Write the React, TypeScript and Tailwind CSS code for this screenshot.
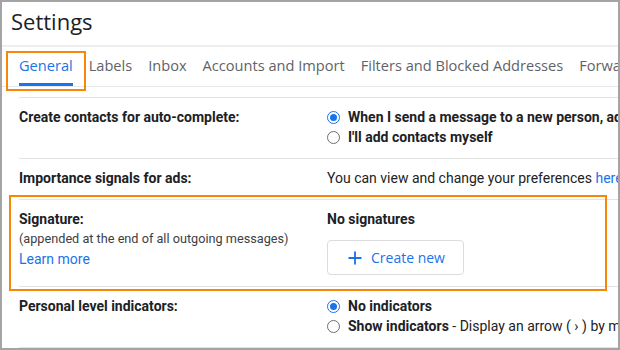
import React from 'react';
import { Plus } from 'lucide-react';

const tabs = ['General', 'Labels', 'Inbox', 'Accounts and Import', 'Filters and Blocked Addresses', 'Forwarding and POP/IMAP'];

const Radio = ({ checked }: { checked?: boolean }) =>
  checked ? (
    <span className="w-[13px] h-[13px] shrink-0 rounded-full border-[1.5px] border-[#1a73e8] flex items-center justify-center mr-[8px]">
      <span className="w-[7px] h-[7px] rounded-full bg-[#1a73e8]" />
    </span>
  ) : (
    <span className="w-[13px] h-[13px] shrink-0 rounded-full border border-[#6f6f6f] mr-[8px]" />
  );

const Row = ({ label, children }: { label: React.ReactNode; children: React.ReactNode }) => (
  <div className="flex border-t border-[#e3e3e3] pt-[9px] pb-[11px] text-[14px] leading-5">
    <div className="w-[308px] shrink-0 text-[#202124]">{label}</div>
    <div className="flex-1 min-w-0 whitespace-nowrap overflow-hidden">{children}</div>
  </div>
);

export default function App() {
  return (
    <div
      className="relative w-[620px] h-[350px] border-2 border-[#a4a4a4] bg-white overflow-hidden"
      style={{ fontFamily: 'Roboto, "Liberation Sans", sans-serif' }}
    >
      {/* header */}
      <div className="h-[45px] pl-[9px] pt-[5px] border-b-2 border-[#eeeeee]">
        <h1 className="text-[22px] leading-[28px] text-[#202124]" style={{ fontFamily: '"Open Sans", sans-serif' }}>
          Settings
        </h1>
      </div>

      {/* tabs */}
      <div className="flex pl-[9px] border-b border-[#e8e8e8] whitespace-nowrap" style={{ fontFamily: '"Open Sans", sans-serif' }}>
        {tabs.map((t, i) => (
          <div key={t} className="flex flex-col px-2 pt-[8px] shrink-0">
            <span className={`text-[14.6px] leading-5 font-medium ${i === 0 ? 'text-[#1a73e8]' : 'text-[#5f6368]'}`}>{t}</span>
            <span className={`mt-[8px] h-[3px] ${i === 0 ? 'bg-[#1a73e8]' : ''}`} />
          </div>
        ))}
      </div>

      {/* rows */}
      <div className="ml-[17px] mt-[10px] border-b border-[#e3e3e3]">
        <Row label={<b className="font-bold">Create contacts for auto-complete:</b>}>
          <div className="flex items-center font-bold text-[#202124]">
            <Radio checked />
            When I send a message to a new person, add them to Other Contacts so that I can auto-complete to them next time
          </div>
          <div className="flex items-center font-bold text-[#202124]">
            <Radio />
            I'll add contacts myself
          </div>
        </Row>

        <Row label={<b className="font-bold">Importance signals for ads:</b>}>
          <span className="text-[#222222]">
            You can view and change your preferences <span className="text-[#1a73e8]">here</span>.
          </span>
        </Row>

        <Row
          label={
            <>
              <div className="font-bold">Signature:</div>
              <div className="text-[12.7px] text-[#3c4043]">(appended at the end of all outgoing messages)</div>
              <div className="text-[#1a73e8]">Learn more</div>
            </>
          }
        >
          <div className="font-bold text-[#202124]">No signatures</div>
          <button className="mt-[11px] h-[35px] w-[137px] flex items-center pl-[17px] border border-[#dadce0] rounded-[4px] text-[#1a73e8] font-medium">
            <Plus size={20} strokeWidth={2.2} />
            <span className="ml-[6px] text-[14px]" style={{ fontFamily: '"Open Sans", sans-serif' }}>Create new</span>
          </button>
        </Row>

        <Row label={<b className="font-bold">Personal level indicators:</b>}>
          <div className="flex items-center font-bold text-[#202124]">
            <Radio checked />
            No indicators
          </div>
          <div className="flex items-center text-[#222222]">
            <Radio />
            <b className="font-bold text-[#202124]">Show indicators</b>&nbsp;- Display an arrow ( › ) by messages sent to my address (not a mailing list)
          </div>
        </Row>
      </div>

      {/* annotation boxes */}
      <div className="absolute left-[4px] top-[49px] w-[80px] h-[40px] border-2 border-[#f7870b]" />
      <div className="absolute left-[7px] top-[193px] w-[598px] h-[96px] border-2 border-[#f7870b]" />
    </div>
  );
}
